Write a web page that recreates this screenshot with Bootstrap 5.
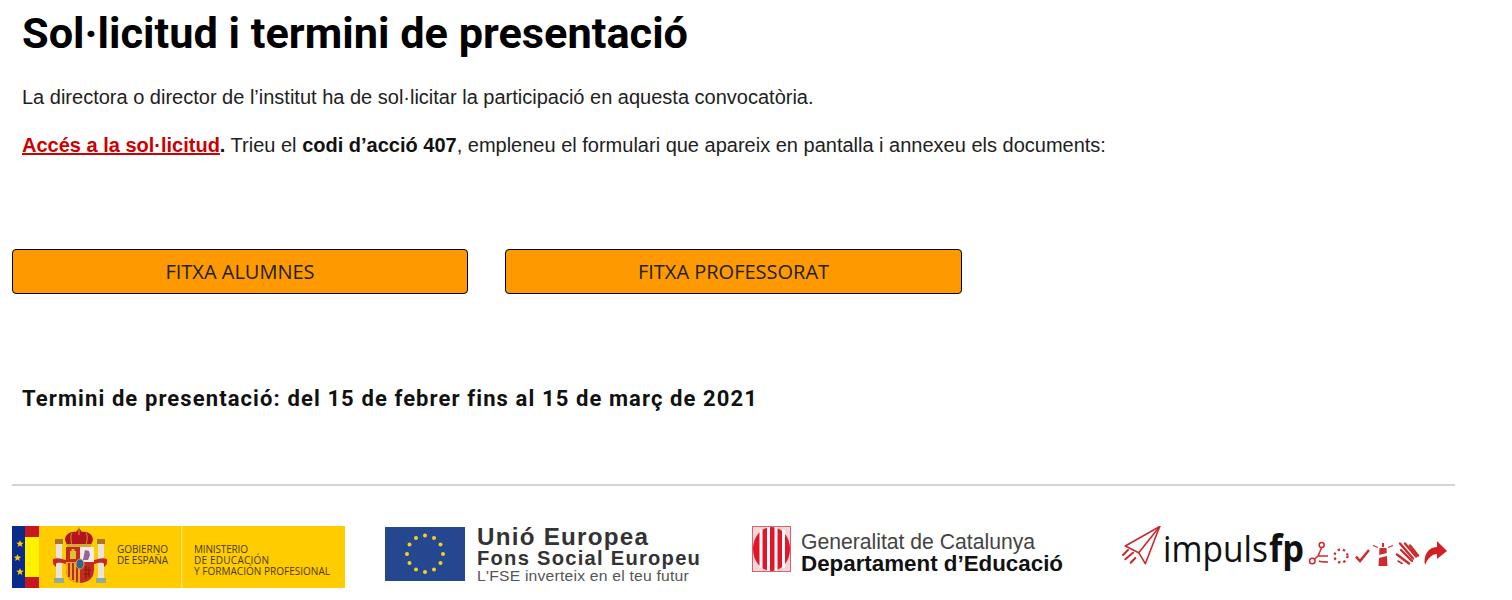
<!DOCTYPE html>
<html lang="ca">
<head>
<meta charset="utf-8">
<title>Sol·licitud i termini de presentació</title>
<link href="https://cdn.jsdelivr.net/npm/bootstrap@5.3.0/dist/css/bootstrap.min.css" rel="stylesheet">
<style>
body{background:#fff;color:#212121;font-family:"Liberation Sans",Arial,sans-serif;overflow:hidden}
.page-wrap{width:1443px;margin-left:12px;padding-top:9px}
.intro{padding-left:10px}
.main-title{font-family:Roboto,sans-serif;font-weight:700;font-size:43.3px;line-height:50px;color:#000;margin:0 0 25px}
.body-copy{font-size:20px;line-height:26px;margin:0 0 21px}
.body-copy:first-of-type{margin-bottom:22px}
.body-copy a{color:#c00;font-weight:700}
.body-copy strong{color:#111}
.btn-row{display:flex;gap:37px;margin-top:91px}
.fitxa{width:456px;height:45px;background:#f90;border:1px solid #000;border-radius:4px;color:#212121;font-family:"Open Sans",sans-serif;font-size:20px;line-height:43px;padding:0;text-align:center}
.fitxa:hover{background:#f90;border-color:#000}
.fitxa + .fitxa{width:457px}
.deadline{font-family:Roboto,sans-serif;font-weight:700;font-size:22px;letter-spacing:1.1px;line-height:28px;color:#111;margin:91px 0 0 10px}
.rule{margin:71px 0 0;border:0;border-top:2px solid #d4d4d4;opacity:1}
.logos{position:relative;height:80px;margin-top:40px}
.logos svg{position:absolute;top:0;display:block}
</style>
</head>
<body>
<main class="page-wrap">
  <section class="intro">
    <h1 class="main-title">Sol·licitud i termini de presentació</h1>
    <p class="body-copy">La directora o director de l’institut ha de sol·licitar la participació en aquesta convocatòria.</p>
    <p class="body-copy"><a href="#">Accés a la sol·licitud</a><strong>.</strong> Trieu el <strong>codi d’acció 407</strong>, empleneu el formulari que apareix en pantalla i annexeu els documents:</p>
  </section>
  <div class="btn-row">
    <a class="btn fitxa" href="#">FITXA ALUMNES</a>
    <a class="btn fitxa" href="#">FITXA PROFESSORAT</a>
  </div>
  <p class="deadline">Termini de presentació: del 15 de febrer fins al 15 de març de 2021</p>
  <hr class="rule">
  <div class="logos">
    <svg style="left:0" width="333" height="62" viewBox="0 0 333 62" role="img" aria-label="Gobierno de España">
      <rect width="333" height="62" fill="#fc0"/>
      <rect width="13" height="62" fill="#0a2a8c"/>
      <rect x="13" width="14" height="62" fill="#c8181e"/>
      <rect x="13" y="11" width="14" height="40" fill="#fff200"/>
      <g fill="#fc0"><path d="M8 14l1 2.600 2.700.1-2.100 1.700.7 2.700L8 19.600l-2.300 1.500.7-2.700-2.100-1.700 2.700-.1z"/><path d="M5.500 28l1 2.600 2.700.1-2.100 1.700.7 2.700-2.300-1.500-2.300 1.500.7-2.700-2.100-1.700 2.700-.1z"/><path d="M8 42l1 2.600 2.700.1-2.100 1.700.7 2.700L8 47.600l-2.300 1.500.7-2.700-2.100-1.700 2.700-.1z"/></g>
      <rect x="169" width="1.500" height="62" fill="#ffe066"/>
      <path d="M53 14c0-6 6-9 11-8l3-4 3 4c5-1 11 2 11 8l-2 5H55z" fill="#b5141c"/>
      <path d="M67 1v8M60 7c-2 3-1 8 0 12M74 7c2 3 1 8 0 12" stroke="#c9a227" stroke-width="1" fill="none"/>
      <rect x="55" y="18" width="24" height="3" fill="#d4ab2c"/>
      <path d="M54 21h14v36c-8 0-14-5-14-13z" fill="#c42a22"/>
      <path d="M68 21h14v23c0 8-6 13-14 13z" fill="#f1ece6"/>
      <path d="M54 36h14v21c-8 0-14-5-14-13z" fill="#e6aa1c"/>
      <path d="M68 36h14v8c0 8-6 13-14 13z" fill="#c42a22"/>
      <path d="M57 37v14M61 37v17M65 37v19" stroke="#b5141c" stroke-width="1.700"/>
      <path d="M58 33v-8h1.500v-2h3v2H64v8z" fill="#e6bd2a"/>
      <path d="M71 34l2-10 4 1 1 4-2 5z" fill="#9a5f9e"/>
      <path d="M72 44h7M72 48h6M74 40v13M77 41v10" stroke="#7f1a12"/>
      <ellipse cx="68" cy="38" rx="4" ry="5" fill="#2f62a2" stroke="#d4ab2c"/>
      <rect x="44" y="18" width="6" height="36" fill="#e9e4da"/><rect x="86" y="18" width="6" height="36" fill="#e9e4da"/>
      <rect x="43" y="13" width="8" height="5" fill="#a9771f"/><rect x="85" y="13" width="8" height="5" fill="#a9771f"/>
      <rect x="42" y="52" width="10" height="5" fill="#8fae9a"/><rect x="84" y="52" width="10" height="5" fill="#8fae9a"/>
      <path d="M41 33c5-2 9 0 13 1v4c-4-1-9-2-10 0v3l-3-3zM95 33c-5-2-9 0-13 1v4c4-1 9-2 10 0v3l3-3z" fill="#c42a22"/>
      <g font-family="'Open Sans',sans-serif" font-size="10" fill="#4a3a10">
        <text x="105" y="27" textLength="51">GOBIERNO</text><text x="105" y="38" textLength="51">DE ESPAÑA</text>
        <text x="182" y="27" textLength="54">MINISTERIO</text><text x="182" y="38" textLength="75">DE EDUCACIÓN</text><text x="182" y="49" textLength="136">Y FORMACIÓN PROFESIONAL</text>
      </g>
    </svg>
    <svg style="left:373px" width="320" height="62" viewBox="0 0 320 62" role="img" aria-label="Unió Europea">
      <rect y="1" width="80" height="54" fill="#25478f"/>
      <g fill="#f2d21c">
        <circle cx="40" cy="9.500" r="2"/><circle cx="49" cy="12" r="2"/><circle cx="55.500" cy="18.500" r="2"/><circle cx="58" cy="28" r="2"/><circle cx="55.500" cy="37" r="2"/><circle cx="49" cy="43.500" r="2"/><circle cx="40" cy="46" r="2"/><circle cx="31" cy="43.500" r="2"/><circle cx="24.500" cy="37" r="2"/><circle cx="22" cy="28" r="2"/><circle cx="24.500" cy="18.500" r="2"/><circle cx="31" cy="12" r="2"/>
      </g>
      <g font-family="'Liberation Sans',sans-serif">
        <text transform="translate(92 19) scale(1.030 1)" font-size="23.500" font-weight="700" letter-spacing="1.200" fill="#333">Unió Europea</text>
        <text transform="translate(92 39) scale(1.035 1)" font-size="19.500" font-weight="700" letter-spacing="1.200" fill="#333">Fons Social Europeu</text>
        <text x="92" y="55" font-size="15.500" letter-spacing=".2" fill="#555" textLength="212" lengthAdjust="spacingAndGlyphs">L'FSE inverteix en el teu futur</text>
      </g>
    </svg>
    <svg style="left:740px" width="320" height="62" viewBox="0 0 320 62" role="img" aria-label="Generalitat de Catalunya">
      <rect x=".5" y=".5" width="38" height="45" fill="#f7d5d7" stroke="#e0606a"/>
      <ellipse cx="19.500" cy="23" rx="18.500" ry="22" fill="#e2152a"/>
      <g fill="#fff"><rect x="7.500" y="4" width="3" height="38"/><rect x="15" y="1" width="3" height="44"/><rect x="22.500" y="1" width="3" height="44"/><rect x="30" y="4" width="3" height="38"/></g>
      <g font-family="'Liberation Sans',sans-serif">
        <text x="49" y="23" font-size="22" fill="#444" textLength="234" lengthAdjust="spacingAndGlyphs">Generalitat de Catalunya</text>
        <text x="49" y="45" font-size="21.500" font-weight="700" fill="#111" textLength="262" lengthAdjust="spacingAndGlyphs">Departament d’Educació</text>
      </g>
    </svg>
    <svg style="left:1108px" width="335" height="62" viewBox="0 0 335 62" role="img" aria-label="Impuls FP">
      <g fill="none" stroke="#c8282c" stroke-width="1.600" stroke-linejoin="round" stroke-linecap="round">
        <path d="M39.700.5L5.300 20l13.400 6.700L25.300 37.700z"/><path d="M39.700.5L18.700 26.700"/>
        <path d="M3 29l5-5M5.300 33.300L13 26.700M10.700 36.700l4.600-4.700" stroke-width="2"/>
      </g>
      <text transform="translate(43 36) scale(.905 1)" font-family="'Open Sans',sans-serif" font-size="37" fill="#111">impuls</text>
      <text transform="translate(149 36) scale(.930 1)" font-family="'Open Sans',sans-serif" font-size="37" font-weight="700" fill="#111">fp</text>
      <g fill="none" stroke="#cf2a2e" stroke-width="1.500">
        <circle cx="201.700" cy="19" r="2.500"/><circle cx="192.300" cy="35" r="2.800"/>
        <path d="M201.700 21.500L198 30l-3.500 3M198 30h10M199 35c2 1 6 1 9 1"/>
        <circle cx="221" cy="30" r="6.500" stroke-width="2.300" stroke-dasharray="2.300 3"/>
        <path d="M236 30.700l4 4.300 9-11" stroke-width="2.500"/>
        <path d="M253 19.500l5 2M268 21.500l5-2" stroke-width="1.300"/>
        <path d="M263 17v4" stroke-width="2"/>
      </g>
      <path d="M259.500 22h7l1 18h-9z" fill="#cf2a2e"/><path d="M259 29l8-2v3l-8 2z" fill="#fff"/>
      <g fill="none" stroke="#cf2a2e" stroke-width="2.400" stroke-linecap="round">
        <path d="M280 17.500l13 15M285 17.500l11 13M290 19.500l8 10M277 28.500l12 9M281 24l11 11"/>
        <path d="M278 35l4 2.500" stroke-width="1.500"/>
      </g>
      <path d="M305 39C303 30 308 21 317 21v-6l10 10-10 8v-5c-5 0-9 4-12 11z" fill="#d21f24"/>
    </svg>
  </div>
</main>
<script src="https://cdn.jsdelivr.net/npm/bootstrap@5.3.0/dist/js/bootstrap.bundle.min.js"></script>
</body>
</html>
